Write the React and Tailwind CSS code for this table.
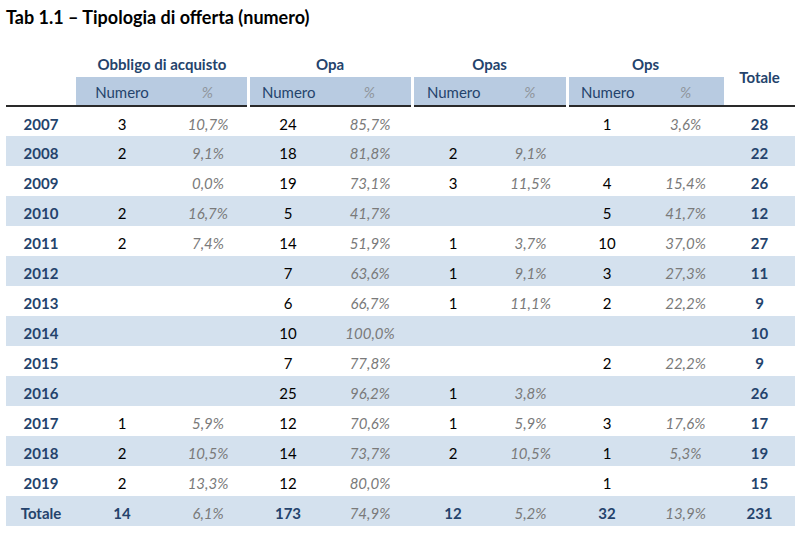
import React from "react";

const rows = [
  ["2007", "3", "10,7%", "24", "85,7%", "", "", "1", "3,6%", "28"],
  ["2008", "2", "9,1%", "18", "81,8%", "2", "9,1%", "", "", "22"],
  ["2009", "", "0,0%", "19", "73,1%", "3", "11,5%", "4", "15,4%", "26"],
  ["2010", "2", "16,7%", "5", "41,7%", "", "", "5", "41,7%", "12"],
  ["2011", "2", "7,4%", "14", "51,9%", "1", "3,7%", "10", "37,0%", "27"],
  ["2012", "", "", "7", "63,6%", "1", "9,1%", "3", "27,3%", "11"],
  ["2013", "", "", "6", "66,7%", "1", "11,1%", "2", "22,2%", "9"],
  ["2014", "", "", "10", "100,0%", "", "", "", "", "10"],
  ["2015", "", "", "7", "77,8%", "", "", "2", "22,2%", "9"],
  ["2016", "", "", "25", "96,2%", "1", "3,8%", "", "", "26"],
  ["2017", "1", "5,9%", "12", "70,6%", "1", "5,9%", "3", "17,6%", "17"],
  ["2018", "2", "10,5%", "14", "73,7%", "2", "10,5%", "1", "5,3%", "19"],
  ["2019", "2", "13,3%", "12", "80,0%", "", "", "1", "", "15"],
];

const totals = ["Totale", "14", "6,1%", "173", "74,9%", "12", "5,2%", "32", "13,9%", "231"];

const groups = ["Obbligo di acquisto", "Opa", "Opas", "Ops"];

export default function App() {
  return (
    <div className="w-[800px] h-[543px] bg-white overflow-hidden font-['Lato',sans-serif]">
      <h1 className="pl-[6px] pt-[5px] h-[48px] text-[18px] font-bold text-black leading-[24px]">
        Tab 1.1 – Tipologia di offerta (numero)
      </h1>
      <table className="ml-[6px] w-[789px] border-collapse table-fixed">
        <colgroup>
          <col className="w-[70px]" />
          <col className="w-[92px]" />
          <col className="w-[80px]" />
          <col className="w-[80px]" />
          <col className="w-[84px]" />
          <col className="w-[82px]" />
          <col className="w-[73px]" />
          <col className="w-[80px]" />
          <col className="w-[77px]" />
          <col className="w-[71px]" />
        </colgroup>
        <thead>
          <tr className="h-[29px]">
            <th></th>
            {groups.map((g) => (
              <th
                key={g}
                colSpan={2}
                className="text-center text-[15px] font-bold text-[#24436c] align-middle p-0 pt-[3px]"
              >
                {g}
              </th>
            ))}
            <th
              rowSpan={2}
              className="text-center text-[15px] font-bold text-[#24436c] align-middle p-0 pt-[2px] border-b-2 border-[#2a2a2a]"
            >
              Totale
            </th>
          </tr>
          <tr className="h-[29px] border-b-2 border-[#2a2a2a]">
            <th className="p-0"></th>
            {groups.map((g, i) => (
              <React.Fragment key={g}>
                <th className="p-0 pt-[3px] bg-[#b8cbe1] text-center text-[15px] font-normal text-[#24436c]">
                  Numero
                </th>
                <th
                  className={`p-0 pt-[3px] bg-[#b8cbe1] text-center text-[15px] font-normal italic text-[#8f959c] ${
                    i < 3 ? "border-r-[3px] border-white" : ""
                  }`}
                >
                  %
                </th>
              </React.Fragment>
            ))}
          </tr>
        </thead>
        <tbody>
          {[...rows, totals].map((r, ri) => {
            const isTotal = ri === rows.length;
            return (
              <tr
                key={r[0]}
                className={`h-[30px] ${ri % 2 === 1 ? "bg-[#d4e1ee]" : "bg-white"}`}
              >
                {r.map((c, ci) => {
                  let cls = "p-0 pt-[5px] text-center text-[15px] ";
                  if (ci === 0 || ci === 9) cls += "font-bold text-[#24436c]";
                  else if (ci % 2 === 0) cls += "italic text-[#7a7a7a]";
                  else if (isTotal) cls += "font-bold text-[#24436c]";
                  else cls += "text-black";
                  return (
                    <td key={ci} className={cls}>
                      {c}
                    </td>
                  );
                })}
              </tr>
            );
          })}
        </tbody>
      </table>
    </div>
  );
}
